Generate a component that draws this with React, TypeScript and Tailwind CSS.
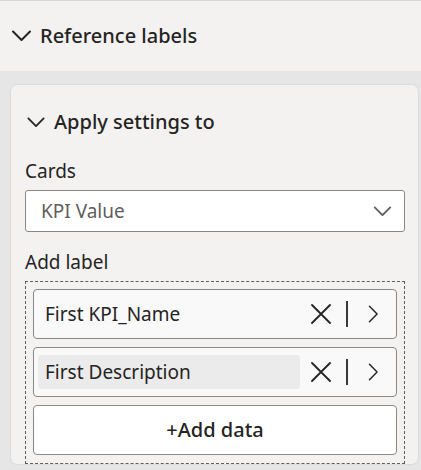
import { useState } from "react";

type LabelItem = {
  id: string;
  name: string;
  selected?: boolean;
};

const ITEMS: LabelItem[] = [
  { id: "kpi-name", name: "First KPI_Name" },
  { id: "description", name: "First Description", selected: true },
];

function ChevronDown({ className }: { className?: string }) {
  return (
    <svg viewBox="0 0 20 12" fill="none" className={className}>
      <path d="M1.5 1.5 10 10l8.5-8.5" stroke="currentColor" strokeWidth="2" strokeLinecap="round" strokeLinejoin="round" />
    </svg>
  );
}

function LabelRow({ item }: { item: LabelItem }) {
  return (
    <div className="flex h-[50px] items-center rounded-[4px] border border-[#8a8886] bg-[#f9f9f9] pl-[4px]">
      <div
        className={`flex h-[34px] w-[262px] items-center rounded-[3px] px-[7px] text-[19px] text-[#252423] ${
          item.selected ? "bg-[#ebebeb]" : ""
        }`}
      >
        {item.name}
      </div>
      <button className="ml-[10px] flex h-[22px] w-[22px] items-center justify-center text-[#252423]">
        <svg viewBox="0 0 20 20" className="h-[20px] w-[20px]" fill="none">
          <path d="M1 1l18 18M19 1 1 19" stroke="currentColor" strokeWidth="1.8" strokeLinecap="round" />
        </svg>
      </button>
      <div className="ml-[14px] h-[26px] w-[2px] bg-[#3b3a39]" />
      <button className="ml-[18px] flex h-[20px] w-[14px] items-center justify-center text-[#252423]">
        <svg viewBox="0 0 12 20" className="h-[18px] w-[11px]" fill="none">
          <path d="M1.5 1.5 10 10l-8.5 8.5" stroke="currentColor" strokeWidth="1.6" strokeLinecap="round" strokeLinejoin="round" />
        </svg>
      </button>
    </div>
  );
}

export default function App() {
  const [open] = useState(true);

  return (
    <div
      className="h-[470px] w-full overflow-hidden bg-[#e6e6e6] text-[#252423]"
      style={{ fontFamily: '"Noto Sans", "Open Sans", sans-serif' }}
    >
      {/* Collapsed section */}
      <div className="flex h-[71px] items-center border-t border-[#d6d6d6] bg-[#f3f2f1] pl-[11px]">
        <ChevronDown className="h-[12px] w-[21px] text-[#252423]" />
        <span className="ml-[8px] text-[20px] font-medium">Reference labels</span>
      </div>

      {/* Expanded card */}
      <div className="ml-[11px] mr-[3px] mt-[14px] rounded-[6px] bg-[#f3f2f1] pl-[14px] pr-[13px] shadow-[0_0_2px_rgba(0,0,0,0.15)]">
        <div className="flex h-[74px] items-center pl-[2px]">
          <ChevronDown className="h-[11px] w-[18px] text-[#252423]" />
          <span className="ml-[9px] text-[20px] font-medium">Apply settings to</span>
        </div>

        {open && (
          <>
            <div className="h-[24px] text-[19px] leading-[24px]">Cards</div>
            <div className="mt-[7px] flex h-[42px] items-center justify-between rounded-[3px] border border-[#8a8886] bg-white pl-[15px] pr-[11px]">
              <span className="text-[19px] text-[#605e5c]">KPI Value</span>
              <ChevronDown className="h-[11px] w-[21px] text-[#605e5c]" />
            </div>

            <div className="mt-[18px] h-[24px] text-[19px] leading-[24px]">Add label</div>
            <div className="mt-[7px] flex flex-col gap-[8px] border border-dashed border-[#605e5c] p-[7px] pb-[8px]">
              {ITEMS.map((item) => (
                <LabelRow key={item.id} item={item} />
              ))}
              <button className="flex h-[50px] items-center justify-center rounded-[4px] border border-[#8a8886] bg-white text-[20px] font-medium text-[#252423]">
                +Add data
              </button>
            </div>
          </>
        )}
      </div>
    </div>
  );
}
